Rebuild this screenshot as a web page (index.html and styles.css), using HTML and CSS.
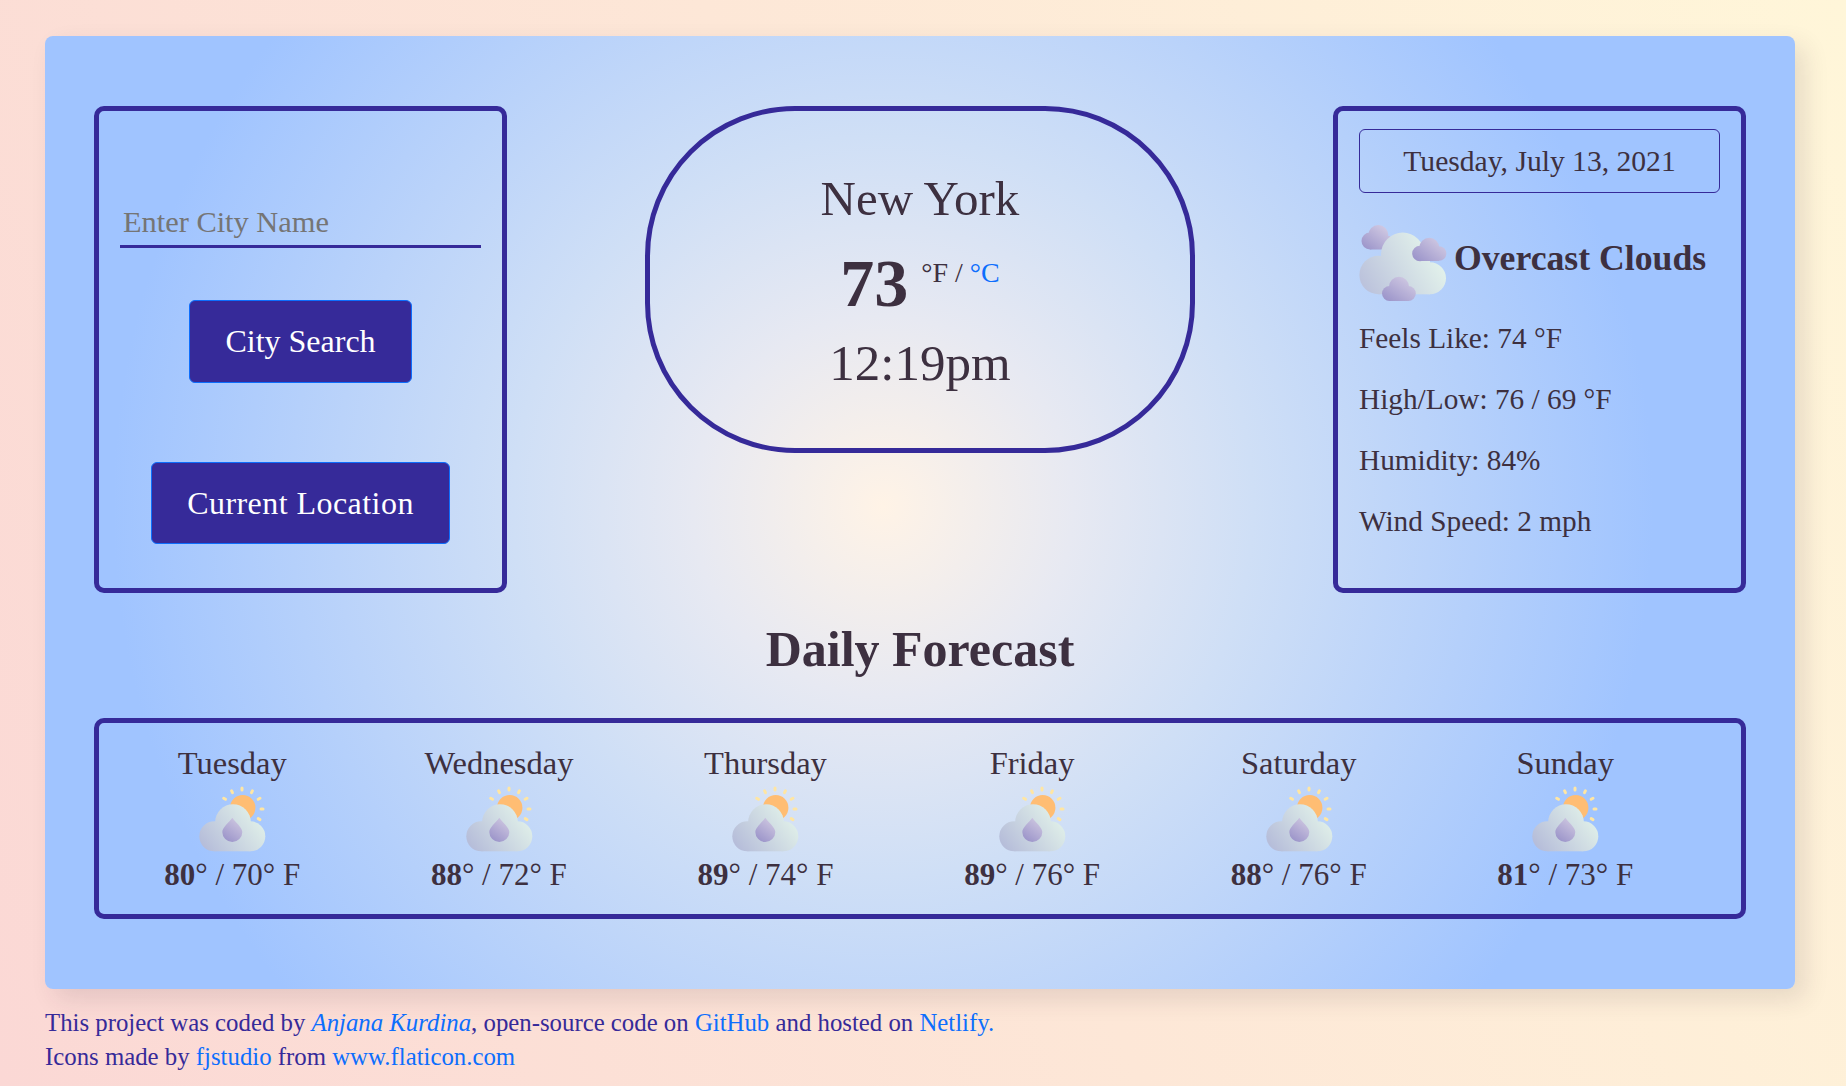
FILE: index.html
```html
<!DOCTYPE html>
<html>
  <head>
    <meta charset="utf-8">
    <title>Weather App</title>
    <link rel="stylesheet" href="styles.css">
  </head>

  <body>
    <svg class="defs" width="0" height="0">
      <defs>
        <linearGradient id="cloudFill" gradientUnits="userSpaceOnUse" x1="8" y1="66" x2="62" y2="26">
          <stop offset="0" stop-color="#b5bcd9" />
          <stop offset="1" stop-color="#e3f3ea" />
        </linearGradient>
        <linearGradient id="dropFill" gradientUnits="userSpaceOnUse" x1="27" y1="56" x2="42" y2="36">
          <stop offset="0" stop-color="#9a93c9" />
          <stop offset="1" stop-color="#cdc6e0" />
        </linearGradient>
        <linearGradient id="bigCloud" gradientUnits="userSpaceOnUse" x1="8" y1="72" x2="80" y2="30">
          <stop offset="0" stop-color="#bcc3dc" />
          <stop offset="1" stop-color="#e5f5ec" />
        </linearGradient>
        <linearGradient id="puffA" gradientUnits="userSpaceOnUse" x1="6" y1="32" x2="24" y2="8">
          <stop offset="0" stop-color="#9a93c9" />
          <stop offset="1" stop-color="#cfc8e2" />
        </linearGradient>
        <linearGradient id="puffB" gradientUnits="userSpaceOnUse" x1="58" y1="44" x2="78" y2="20">
          <stop offset="0" stop-color="#9a93c9" />
          <stop offset="1" stop-color="#cfc8e2" />
        </linearGradient>
        <linearGradient id="puffC" gradientUnits="userSpaceOnUse" x1="28" y1="84" x2="46" y2="58">
          <stop offset="0" stop-color="#9a93c9" />
          <stop offset="1" stop-color="#cfc8e2" />
        </linearGradient>
        <symbol id="rain-sun" viewBox="0 0 70 70">
          <circle cx="45.7" cy="23.7" r="12.7" fill="#ffbd73" />
          <g stroke="#ffe6a3" stroke-width="3" stroke-linecap="round">
            <path d="M45 4v2" />
            <path d="M55.4 6.800l-0.900 1.800" />
            <path d="M63 14.300l-1.800 1" />
            <path d="M66 25h-2" />
            <path d="M63 35.600l-1.800-1" />
            <path d="M34.600 6.800l0.900 1.800" />
            <path d="M26.700 14.300l1.800 1" />
          </g>
          <g fill="url(#cloudFill)">
            <circle cx="36" cy="38" r="17.8" />
            <circle cx="17.3" cy="52.3" r="15" />
            <circle cx="53.3" cy="52.3" r="15" />
            <rect x="17.3" y="40" width="36" height="27.3" />
          </g>
          <path d="M35.3 33.700c3 4.400 10 9.800 10 14.300a10 10 0 0 1-20 0c0-4.500 7-9.900 10-14.300z" fill="url(#dropFill)" />
        </symbol>
      </defs>
    </svg>

    <main class="app">
      <section class="top-row">
        <form class="panel search-panel">
          <input class="city-input" type="text" placeholder="Enter City Name">
          <button class="btn btn-city" type="button">City Search</button>
          <button class="btn btn-location" type="button">Current Location</button>
        </form>

        <div class="now">
          <h1 class="city">New York</h1>
          <div class="temp-line">
            <strong class="temp">73</strong>
            <span class="units">°F / <a href="#">°C</a></span>
          </div>
          <div class="time">12:19pm</div>
        </div>

        <div class="panel details">
          <div class="date-box">Tuesday, July 13, 2021</div>
          <div class="condition">
            <svg class="condition-icon" viewBox="0 0 90 90">
              <g fill="url(#puffA)">
                <circle cx="19.300" cy="17" r="10" />
                <circle cx="11" cy="23" r="8.500" />
                <rect x="11" y="18" width="20" height="13.500" />
              </g>
              <g fill="url(#bigCloud)">
                <circle cx="43.700" cy="36.300" r="21.700" />
                <circle cx="19.700" cy="57" r="19.300" />
                <circle cx="71" cy="60.300" r="16" />
                <rect x="19.700" y="40" width="51.300" height="36.300" />
              </g>
              <g fill="url(#puffB)">
                <circle cx="70.300" cy="29.700" r="10" />
                <circle cx="61" cy="35.500" r="7.800" />
                <circle cx="80" cy="35.500" r="7.300" />
                <rect x="61" y="30" width="19" height="13" />
              </g>
              <g fill="url(#puffC)">
                <circle cx="40" cy="68.700" r="10" />
                <circle cx="30.500" cy="75.500" r="7.500" />
                <circle cx="49.300" cy="75.500" r="7.500" />
                <rect x="30.500" y="70" width="18.800" height="13" />
              </g>
            </svg>
            <h2 class="condition-text">Overcast Clouds</h2>
          </div>
          <p class="stat">Feels Like: 74 °F</p>
          <p class="stat">High/Low: 76 / 69 °F</p>
          <p class="stat">Humidity: 84%</p>
          <p class="stat">Wind Speed: 2 mph</p>
        </div>
      </section>

      <h2 class="forecast-title">Daily Forecast</h2>

      <section class="panel forecast">
        <div class="day">
          <div class="day-name">Tuesday</div>
          <svg class="day-icon"><use href="#rain-sun" /></svg>
          <div class="day-temp"><strong>80</strong>° / 70° F</div>
        </div>
        <div class="day">
          <div class="day-name">Wednesday</div>
          <svg class="day-icon"><use href="#rain-sun" /></svg>
          <div class="day-temp"><strong>88</strong>° / 72° F</div>
        </div>
        <div class="day">
          <div class="day-name">Thursday</div>
          <svg class="day-icon"><use href="#rain-sun" /></svg>
          <div class="day-temp"><strong>89</strong>° / 74° F</div>
        </div>
        <div class="day">
          <div class="day-name">Friday</div>
          <svg class="day-icon"><use href="#rain-sun" /></svg>
          <div class="day-temp"><strong>89</strong>° / 76° F</div>
        </div>
        <div class="day">
          <div class="day-name">Saturday</div>
          <svg class="day-icon"><use href="#rain-sun" /></svg>
          <div class="day-temp"><strong>88</strong>° / 76° F</div>
        </div>
        <div class="day">
          <div class="day-name">Sunday</div>
          <svg class="day-icon"><use href="#rain-sun" /></svg>
          <div class="day-temp"><strong>81</strong>° / 73° F</div>
        </div>
      </section>
    </main>

    <footer class="credits">
      <div>This project was coded by <a href="#"><em>Anjana Kurdina</em></a>, open-source code on <a href="#">GitHub</a> and hosted on <a href="#">Netlify.</a></div>
      <div>Icons made by <a href="#">fjstudio</a> from <a href="#">www.flaticon.com</a></div>
    </footer>
  </body>
</html>
```

FILE: styles.css
```css
* {
  box-sizing: border-box;
  margin: 0;
  padding: 0;
}

html,
body {
  height: 100%;
}

body {
  background: linear-gradient(68deg, #fbd8d5, #fff6d9);
  color: #3d3040;
  font-family: "Liberation Serif", serif;
  overflow: hidden;
  padding: 36px 51px 0 45px;
}

a {
  color: #0d6efd;
  text-decoration: none;
}

.defs {
  display: block;
  height: 0;
}

/* main card */
.app {
  background: radial-gradient(circle at 838px 470px, #fff3e6 0, #e7e9f2 190px, #cfdff6 370px, #a0c4ff 770px);
  border-radius: 8px;
  box-shadow: 10px 10px 25px rgba(60, 40, 60, 0.12);
  height: 953px;
  padding: 70px 49px 0;
}

.top-row {
  align-items: flex-start;
  display: flex;
  justify-content: space-between;
}

.panel {
  border: 5px solid #362a99;
  border-radius: 10px;
}

/* search */
.search-panel {
  align-items: center;
  display: flex;
  flex-direction: column;
  height: 487px;
  padding-top: 85px;
  width: 413px;
}

.city-input {
  background: transparent;
  border: 0;
  border-bottom: 3px solid #362a99;
  font-family: inherit;
  font-size: 30.400px;
  height: 52px;
  outline: none;
  padding: 4px 3px 0;
  width: 361px;
}

.city-input::placeholder {
  color: #757575;
}

.btn {
  background: #362a99;
  border: 1px solid #0d6efd;
  border-radius: 6px;
  color: #fff;
  font-family: inherit;
  font-size: 32px;
  font-weight: 500;
  height: 82px;
}

.btn-city {
  height: 83px;
  margin-top: 52px;
  width: 223px;
}

.btn-location {
  letter-spacing: 0.45px;
  margin-top: 79px;
  width: 299px;
}

/* current weather */
.now {
  border: 5px solid #362a99;
  border-radius: 150px;
  height: 347px;
  padding-top: 57px;
  text-align: center;
  width: 550px;
}

.city {
  font-size: 49px;
  font-weight: 400;
  line-height: 62px;
}

.temp-line {
  align-items: flex-start;
  display: flex;
  justify-content: center;
  margin-top: 10px;
}

.temp {
  font-size: 68px;
  font-weight: 700;
  line-height: 86px;
}

.units {
  font-size: 28px;
  line-height: 36px;
  margin-left: 13px;
  margin-top: 15px;
}

.time {
  font-size: 51px;
  line-height: 62px;
  margin-top: 6px;
}

/* right panel */
.details {
  height: 487px;
  padding: 18px 21px 0;
  width: 413px;
}

.date-box {
  border: 1px solid #362a99;
  border-radius: 6px;
  font-size: 29.600px;
  height: 64px;
  line-height: 63px;
  text-align: center;
}

.condition {
  align-items: center;
  display: flex;
  height: 90px;
  margin-top: 25px;
}

.condition-icon {
  flex: none;
  height: 90px;
  margin-right: 5px;
  width: 90px;
}

.condition-text {
  font-size: 35.700px;
  font-weight: 700;
  padding-bottom: 10px;
  white-space: nowrap;
}

.stat {
  font-size: 29.300px;
  line-height: 40px;
  margin-top: 21px;
}

.condition + .stat {
  margin-top: 10px;
}

.forecast-title {
  font-size: 50px;
  font-weight: 700;
  line-height: 64px;
  margin-top: 24px;
  text-align: center;
}

/* forecast */
.forecast {
  display: grid;
  grid-template-columns: repeat(6, 266.600px);
  height: 201px;
  margin-top: 37px;
  padding-top: 21px;
}

.day {
  text-align: center;
}

.day-name {
  font-size: 32.500px;
  line-height: 38px;
}

.day-icon {
  display: block;
  height: 70px;
  margin: 2px auto 0;
  width: 70px;
}

.day-temp {
  font-size: 31px;
  line-height: 38px;
  margin-top: 2px;
}

/* footer */
.credits {
  color: #362a99;
  font-size: 24.800px;
  line-height: 34px;
  margin-top: 17px;
}
```
